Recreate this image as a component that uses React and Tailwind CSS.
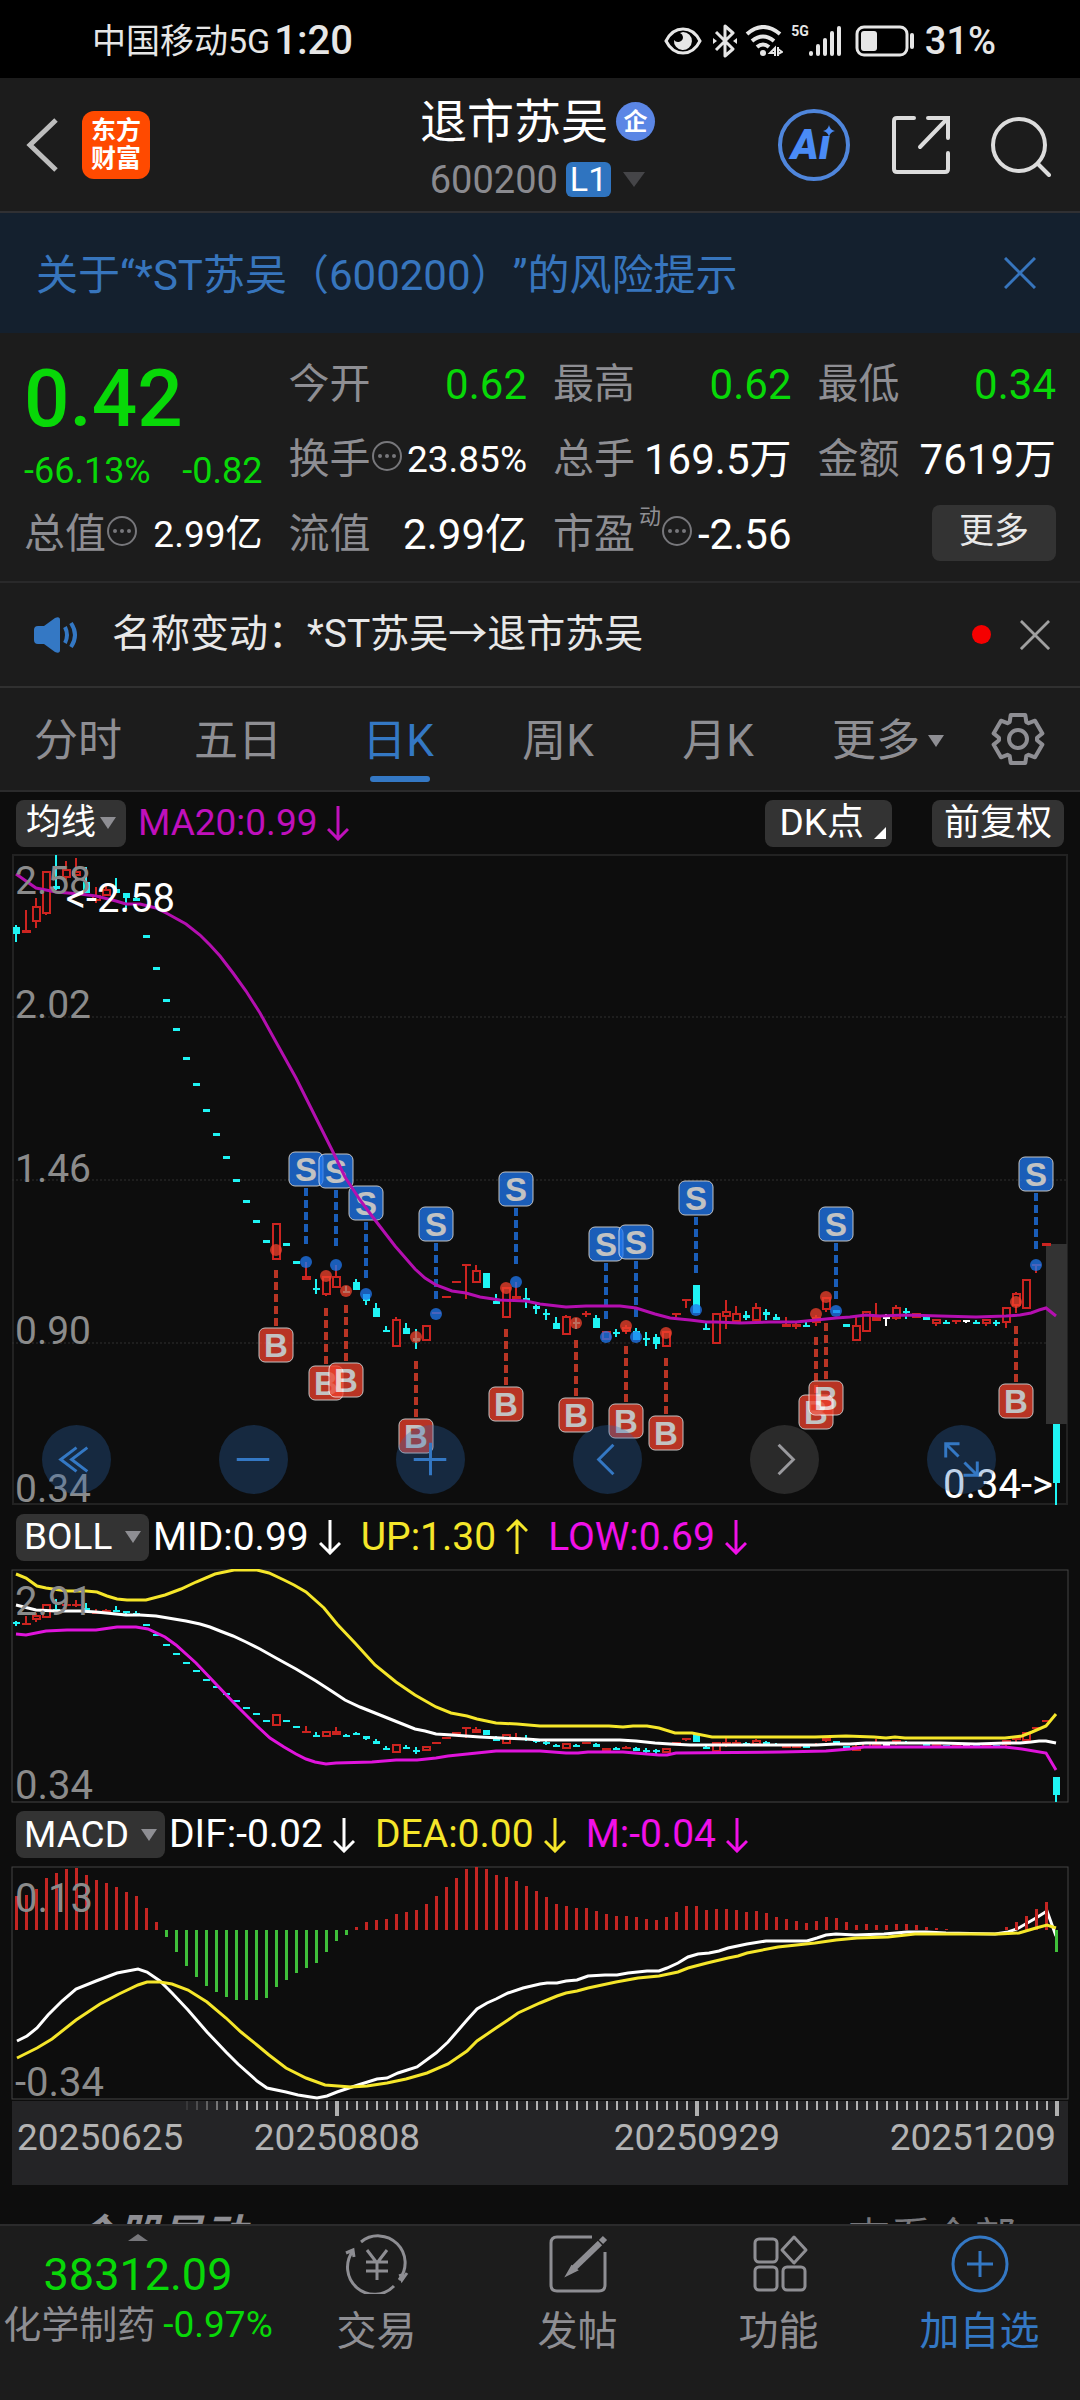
// One candle per trading day, 10px apart: [colour, high, top, bottom, low]
// c = cyan (down), r = red (up), w = white (flat)
const CANDLES = [
  ["c", 925, 927, 934, 942], ["r", 910, 930, 933, 933], ["r", 898, 906, 922, 928], ["r", 871, 871, 914, 915],
  ["c", 855, 886, 889, 890], ["r", 861, 869, 878, 886], ["r", 858, 871, 876, 880], ["c", 867, 882, 893, 893],
  ["r", 887, 895, 901, 903], ["r", 886, 889, 896, 896], ["c", 878, 889, 893, 893], ["c", 893, 893, 898, 909],
  ["c", 892, 898, 901, 901], ["c", 935, 935, 938, 938], ["c", 967, 967, 970, 970], ["c", 999, 999, 1002, 1002],
  ["c", 1028, 1028, 1031, 1031], ["c", 1057, 1057, 1060, 1060], ["c", 1083, 1083, 1086, 1086], ["c", 1109, 1109, 1112, 1112],
  ["c", 1133, 1133, 1136, 1136], ["c", 1156, 1156, 1159, 1159], ["c", 1179, 1179, 1182, 1182], ["c", 1200, 1200, 1203, 1203],
  ["c", 1220, 1220, 1223, 1223], ["c", 1240, 1240, 1243, 1243], ["r", 1223, 1223, 1260, 1260], ["c", 1243, 1243, 1246, 1246],
  ["c", 1261, 1261, 1264, 1264], ["r", 1262, 1276, 1280, 1280], ["c", 1279, 1288, 1290, 1294], ["r", 1276, 1276, 1295, 1296],
  ["r", 1265, 1276, 1288, 1288], ["c", 1286, 1291, 1293, 1293], ["c", 1279, 1282, 1290, 1290], ["c", 1294, 1294, 1301, 1305],
  ["c", 1303, 1308, 1317, 1317], ["c", 1326, 1330, 1332, 1332], ["r", 1317, 1319, 1347, 1347], ["c", 1323, 1328, 1334, 1334],
  ["c", 1329, 1338, 1341, 1349], ["r", 1325, 1325, 1341, 1341], ["r", 1312, 1312, 1314, 1314], ["r", 1296, 1296, 1298, 1298],
  ["r", 1281, 1281, 1283, 1283], ["r", 1264, 1264, 1266, 1299], ["r", 1265, 1270, 1283, 1283], ["c", 1273, 1273, 1288, 1288],
  ["c", 1294, 1301, 1304, 1304], ["r", 1287, 1287, 1318, 1318], ["r", 1282, 1296, 1299, 1299], ["c", 1288, 1298, 1301, 1308],
  ["c", 1304, 1306, 1309, 1314], ["c", 1309, 1313, 1315, 1320], ["c", 1317, 1323, 1329, 1329], ["r", 1315, 1316, 1335, 1335],
  ["c", 1318, 1322, 1324, 1329], ["r", 1311, 1313, 1315, 1317], ["c", 1315, 1318, 1328, 1328], ["r", 1331, 1331, 1340, 1340],
  ["c", 1329, 1332, 1334, 1337], ["r", 1325, 1327, 1332, 1334], ["c", 1328, 1331, 1340, 1340], ["c", 1332, 1338, 1340, 1346],
  ["c", 1334, 1337, 1344, 1349], ["r", 1331, 1331, 1347, 1347], ["r", 1313, 1313, 1315, 1317], ["r", 1299, 1299, 1301, 1308],
  ["c", 1285, 1285, 1313, 1313], ["c", 1323, 1328, 1330, 1330], ["r", 1313, 1313, 1344, 1344], ["r", 1300, 1311, 1317, 1329],
  ["r", 1306, 1313, 1322, 1324], ["c", 1311, 1315, 1318, 1320], ["r", 1303, 1307, 1321, 1321], ["c", 1309, 1312, 1315, 1320],
  ["c", 1314, 1317, 1320, 1320], ["r", 1317, 1324, 1327, 1327], ["r", 1321, 1324, 1327, 1329], ["c", 1320, 1325, 1327, 1327],
  ["r", 1315, 1317, 1323, 1326], ["r", 1297, 1297, 1310, 1312], ["c", 1310, 1310, 1313, 1313], ["c", 1324, 1324, 1327, 1327],
  ["r", 1315, 1325, 1341, 1341], ["r", 1311, 1311, 1332, 1332], ["r", 1303, 1317, 1321, 1321], ["w", 1314, 1317, 1319, 1326],
  ["r", 1305, 1307, 1319, 1320], ["c", 1308, 1311, 1313, 1319], ["r", 1313, 1313, 1318, 1318], ["c", 1315, 1317, 1320, 1320],
  ["r", 1319, 1319, 1324, 1326], ["c", 1320, 1322, 1324, 1324], ["r", 1320, 1320, 1322, 1324], ["w", 1320, 1320, 1322, 1323],
  ["c", 1320, 1322, 1324, 1324], ["r", 1319, 1319, 1324, 1326], ["c", 1320, 1322, 1324, 1326], ["r", 1307, 1307, 1323, 1328],
  ["r", 1292, 1293, 1306, 1313], ["r", 1279, 1279, 1309, 1309], ["r", 1264, 1264, 1266, 1273], ["r", 1243, 1243, 1246, 1246],
  ["c", 1424, 1424, 1483, 1505],
];

const CANDLE_COLORS = { c: "#1ff4f4", r: "#cc2420", w: "#ffffff" };

const MA20 = [
  [16, 874], [36, 888], [56, 892], [80, 894], [96, 896], [116, 901], [126, 904], [140, 904], [156, 908], [168, 914],
  [186, 924], [200, 935], [210, 945], [220, 956], [233, 973], [246, 991], [260, 1013], [276, 1042], [296, 1078], [316, 1118],
  [333, 1152], [345, 1177], [360, 1200], [375, 1220], [395, 1246], [415, 1269], [425, 1278], [436, 1285], [452, 1291],
  [466, 1293], [480, 1297], [500, 1300], [526, 1301], [540, 1304], [566, 1307], [586, 1306], [620, 1306], [636, 1308],
  [655, 1314], [670, 1318], [690, 1320], [706, 1322], [716, 1322], [740, 1323], [770, 1322], [796, 1322], [816, 1320],
  [836, 1318], [850, 1317], [866, 1315], [880, 1316], [906, 1315], [940, 1316], [976, 1317], [1006, 1316], [1020, 1315],
  [1031, 1313], [1039, 1310], [1046, 1308], [1056, 1316],
];

const BOLL_UP = [
  [16, 1574], [26, 1578], [37, 1586], [46, 1588], [67, 1591], [86, 1591], [97, 1592], [107, 1596], [117, 1599],
  [127, 1600], [146, 1600], [165, 1595], [181, 1589], [196, 1582], [215, 1574], [234, 1570], [257, 1570], [269, 1573],
  [284, 1580], [294, 1585], [306, 1592], [324, 1608], [337, 1624], [355, 1643], [375, 1665], [396, 1682], [415, 1695],
  [436, 1707], [451, 1713], [467, 1716], [477, 1719], [496, 1723], [517, 1724], [540, 1726], [609, 1726], [623, 1727],
  [633, 1726], [647, 1726], [659, 1728], [675, 1733], [692, 1733], [712, 1737], [815, 1737], [846, 1736], [874, 1737],
  [886, 1738], [895, 1737], [905, 1738], [1005, 1738], [1022, 1736], [1032, 1732], [1046, 1726], [1056, 1714],
];

const BOLL_LOW = [
  [16, 1634], [26, 1635], [46, 1631], [67, 1630], [96, 1630], [117, 1627], [136, 1627], [148, 1629], [165, 1637],
  [176, 1645], [196, 1663], [215, 1683], [234, 1703], [257, 1726], [270, 1738], [284, 1747], [296, 1754], [306, 1759],
  [315, 1762], [326, 1764], [336, 1763], [372, 1762], [396, 1760], [417, 1760], [436, 1758], [448, 1756], [496, 1751],
  [540, 1751], [566, 1753], [578, 1753], [588, 1752], [623, 1752], [659, 1755], [667, 1755], [676, 1753], [781, 1752],
  [826, 1751], [850, 1749], [864, 1747], [1005, 1747], [1022, 1749], [1046, 1753], [1056, 1770],
];

const MACD_BARS = [
  34, 35, 41, 52, 57, 61, 62, 55, 50, 47, 43, 38, 34, 22, 8, -7, -22, -36, -47, -56, -62, -67, -70, -70, -70, -68,
  -57, -50, -43, -38, -33, -22, -11, -5, 3, 8, 10, 11, 16, 18, 20, 26, 34, 43, 52, 61, 63, 61, 55, 53, 49, 44, 39,
  33, 26, 24, 22, 22, 19, 16, 14, 14, 13, 11, 10, 13, 18, 24, 24, 20, 21, 21, 20, 18, 19, 17, 13, 11, 9, 7, 9, 13,
  12, 8, 5, 6, 5, 5, 6, 6, 5, 3, 2, 1, 0, 0, 0, 0, 0, 3, 8, 14, 21, 28, -22,
];

const DIF = [
  [17, 2041], [27, 2036], [37, 2028], [48, 2015], [62, 2001], [76, 1989], [96, 1981], [117, 1973], [138, 1969],
  [147, 1972], [160, 1981], [172, 1993], [188, 2010], [207, 2032], [226, 2052], [238, 2064], [257, 2081], [267, 2088],
  [286, 2092], [298, 2095], [317, 2098], [327, 2096], [337, 2092], [358, 2085], [377, 2079], [387, 2078], [398, 2073],
  [417, 2067], [436, 2053], [448, 2042], [467, 2020], [477, 2009], [487, 2003], [496, 1999], [508, 1993], [523, 1988],
  [540, 1984], [547, 1983], [557, 1983], [566, 1981], [577, 1980], [588, 1976], [605, 1975], [617, 1975], [628, 1973],
  [647, 1971], [659, 1971], [667, 1968], [678, 1963], [688, 1957], [698, 1954], [709, 1953], [719, 1951], [728, 1948],
  [747, 1944], [766, 1941], [807, 1941], [817, 1938], [826, 1935], [836, 1934], [855, 1935], [884, 1934], [907, 1932],
  [926, 1932], [946, 1933], [995, 1934], [1008, 1932], [1017, 1929], [1036, 1918], [1047, 1911], [1056, 1936],
];

const DEA = [
  [17, 2058], [37, 2048], [52, 2039], [76, 2020], [88, 2012], [100, 2004], [119, 1994], [138, 1985], [147, 1982],
  [160, 1982], [172, 1984], [188, 1990], [207, 2002], [226, 2018], [241, 2032], [257, 2045], [269, 2055], [286, 2068],
  [306, 2078], [325, 2085], [351, 2087], [367, 2086], [387, 2083], [406, 2079], [427, 2073], [448, 2064], [467, 2051],
  [477, 2041], [496, 2028], [508, 2020], [518, 2013], [540, 2003], [557, 1996], [566, 1993], [577, 1991], [588, 1988],
  [616, 1982], [638, 1978], [659, 1976], [678, 1972], [688, 1968], [707, 1963], [728, 1958], [738, 1956], [747, 1953],
  [778, 1947], [815, 1943], [836, 1940], [857, 1938], [888, 1937], [915, 1934], [998, 1934], [1019, 1933], [1036, 1928],
  [1047, 1925], [1056, 1928],
];

// Buy / sell signals: [x, badge centre y, dot y]
const SELLS = [
  [306, 1169, 1262], [336, 1171, 1265], [366, 1203, 1294], [436, 1224, 1314], [516, 1189, 1282], [606, 1244, 1337],
  [636, 1242, 1337], [696, 1198, 1310], [836, 1224, 1311], [1036, 1174, 1265],
];
const BUYS = [
  [276, 1345, 1250], [326, 1383, 1276], [346, 1380, 1291], [416, 1436, 1337], [506, 1404, 1288], [576, 1415, 1323],
  [626, 1421, 1326], [666, 1433, 1333], [816, 1412, 1314], [826, 1398, 1297], [1016, 1401, 1302],
];

const toPoints = (pts) => pts.map((p) => p.join(",")).join(" ");
// The BOLL pane shows the same prices on a flatter scale
const toBoll = (y) => Math.round(1802 - (1504 - y) * 0.3124);

const GEAR = Array.from({ length: 6 }, (_, i) =>
  [[-26, 19], [-17, 25], [17, 25], [26, 19]].map(([deg, r]) => {
    const a = ((i * 60 - 90 + deg) * Math.PI) / 180;
    return `${(28 + r * Math.cos(a)).toFixed(1)},${(28 + r * Math.sin(a)).toFixed(1)}`;
  }).join(" ")
).join(" ");

function Triangle({ className, up }) {
  return (
    <svg viewBox="0 0 16 12" preserveAspectRatio="none" className={className} fill="currentColor" aria-hidden="true">
      <path d={up ? "M8 0L16 12H0Z" : "M0 0H16L8 12Z"} />
    </svg>
  );
}

function Arrow({ up }) {
  return (
    <svg viewBox="0 0 22 36" className="ml-[10px] h-9 w-[22px] shrink-0" fill="none" stroke="currentColor" strokeWidth="3" aria-hidden="true">
      <path d={up ? "M11 35V3M1 12L11 2L21 12" : "M11 1V33M1 24L11 34L21 24"} />
    </svg>
  );
}

function CloseIcon({ className }) {
  return (
    <svg viewBox="0 0 32 32" className={className} fill="none" stroke="currentColor" strokeWidth="3" aria-hidden="true">
      <path d="M1 1L31 31M31 1L1 31" />
    </svg>
  );
}

function InfoDots() {
  return (
    <svg viewBox="0 0 32 32" className="mb-2 h-8 w-8 shrink-0 text-[#77777b]" aria-hidden="true">
      <circle cx="16" cy="16" r="14" fill="none" stroke="currentColor" strokeWidth="2" />
      <g fill="currentColor">
        <circle cx="9" cy="16" r="2" />
        <circle cx="16" cy="16" r="2" />
        <circle cx="23" cy="16" r="2" />
      </g>
    </svg>
  );
}

function StatusBar() {
  return (
    <div className="flex h-[78px] items-center bg-black pt-1 pr-[84px] pl-[92px] text-[#e6e6e6]">
      <span className="text-[34px]">中国移动5G</span>
      <span className="ml-1 text-[40px] font-medium">1:20</span>
      <div className="ml-auto flex items-center">
        <svg viewBox="0 0 38 28" className="h-7 w-[38px]" aria-hidden="true">
          <path d="M2 14Q8 2 19 2T36 14Q30 26 19 26T2 14Z" fill="none" stroke="currentColor" strokeWidth="3" />
          <path d="M19 5a9 9 0 1 1-9 8a5 5 0 0 0 9-3a5 5 0 0 0-3-4Z" fill="currentColor" />
        </svg>
        <svg viewBox="0 0 24 34" className="ml-[11px] h-[34px] w-6" fill="none" stroke="currentColor" strokeWidth="3" aria-hidden="true">
          <path d="M3 8L20 25L12 32V2L20 9L3 26" strokeLinejoin="round" />
          <path d="M0 14L4 17L0 20ZM24 14L20 17L24 20Z" fill="currentColor" stroke="none" />
        </svg>
        <svg viewBox="0 0 38 32" className="ml-2 h-8 w-[38px]" fill="none" stroke="currentColor" strokeWidth="4" aria-hidden="true">
          <path d="M2 9Q18 -5 35 9M7 16Q18 7 29 16M12 22Q18 17 24 22" />
          <circle cx="18" cy="28" r="3" fill="currentColor" stroke="none" />
          <path d="M30 31V23L25 28H30M33 22V31M33 24L37 27L33 29" strokeWidth="2" />
        </svg>
        <span className="mb-5 ml-2 text-[14px] font-bold">5G</span>
        <svg viewBox="0 0 34 32" className="h-8 w-[34px]" fill="currentColor" aria-hidden="true">
          <rect x="0" y="26" width="4" height="5" rx="2" />
          <rect x="7" y="19" width="4" height="12" rx="2" />
          <rect x="14" y="13" width="4" height="18" rx="2" />
          <rect x="21" y="6" width="4" height="25" rx="2" />
          <rect x="28" y="1" width="4" height="30" rx="2" />
        </svg>
        <svg viewBox="0 0 60 32" className="ml-3 h-8 w-[60px]" aria-hidden="true">
          <rect x="2" y="2" width="50" height="28" rx="7" fill="none" stroke="currentColor" strokeWidth="3" />
          <rect x="6" y="6" width="16" height="20" rx="3" fill="currentColor" />
          <rect x="55" y="8" width="4" height="16" rx="2" fill="currentColor" />
        </svg>
        <span className="ml-[10px] text-[38px] font-medium">31%</span>
      </div>
    </div>
  );
}

function Header() {
  return (
    <header className="grid h-[135px] grid-cols-[1fr_auto_1fr] items-center border-b-2 border-[#303033] bg-[#1c1c1c] pr-[29px] pl-6">
      <div className="flex items-center gap-6">
        <button aria-label="返回">
          <svg viewBox="0 0 34 54" className="h-[54px] w-[34px]" fill="none" stroke="#bdbdbd" strokeWidth="5">
            <path d="M32 2L6 27L32 52" />
          </svg>
        </button>
        <a href="#home" className="flex h-[68px] w-[68px] flex-col items-center justify-center rounded-xl bg-[#ff4a00] text-[25px] leading-[28px] font-bold text-white">
          <span>东方</span>
          <span>财富</span>
        </a>
      </div>

      <div className="flex flex-col items-center pt-3">
        <h1 className="flex items-center gap-2 text-[47px] leading-[58px] text-white">
          退市苏吴
          <span className="flex h-[39px] w-[39px] items-center justify-center rounded-full bg-[#5b86e5] text-[24px] font-bold">企</span>
        </h1>
        <button className="flex items-center text-[38px] leading-[58px] text-[#8a8a8f]">
          600200
          <span className="ml-2 rounded-md bg-[#2f74c0] px-1 text-[34px] leading-[35px] text-white">L1</span>
          <Triangle className="ml-3 h-[15px] w-[22px] text-[#454548]" />
        </button>
      </div>

      <div className="flex items-center justify-end gap-10">
        <button aria-label="AI">
          <svg viewBox="0 0 74 74" className="h-[74px] w-[74px]" aria-hidden="true">
            <circle cx="37" cy="37" r="34" fill="none" stroke="#4f86dc" strokeWidth="4" />
            <path d="M52 17Q53 22 58 23Q53 24 52 29Q51 24 46 23Q51 22 52 17Z" fill="#4a8bf5" />
            <text x="14" y="51" fontSize="42" fill="#4a8bf5" className="font-black italic">Aı</text>
          </svg>
        </button>
        <button aria-label="分享">
          <svg viewBox="0 0 60 60" className="h-[60px] w-[60px]" fill="none" stroke="#dcdcdc" strokeWidth="4" strokeLinecap="round">
            <path d="M23 3H6Q3 3 3 6V54Q3 57 6 57H54Q57 57 57 54V38M37 3H57V23M56 4L29 32" />
          </svg>
        </button>
        <button aria-label="搜索" className="pt-1">
          <svg viewBox="0 0 60 60" className="h-[60px] w-[60px]" fill="none" stroke="#dcdcdc" strokeWidth="4" strokeLinecap="round">
            <circle cx="28" cy="28" r="26" />
            <path d="M47 47L58 58" />
          </svg>
        </button>
      </div>
    </header>
  );
}

function Stat({ label, sup, info, value, green, small }) {
  return (
    <div className="flex items-center justify-between whitespace-nowrap">
      <dt className="flex items-center text-[41px] text-[#8e8e93]">
        {label}
        {sup && <span className="mb-9 ml-1 text-[22px]">{sup}</span>}
        {info && <InfoDots />}
      </dt>
      <dd
        className={`${small ? "text-[37px]" : "text-[42px]"} ${green ? "text-[#08d808]" : "text-white"}`}
      >
        {value}
      </dd>
    </div>
  );
}

function Quote() {
  return (
    <section className="border-b-2 border-[#29292a] bg-[#1c1c1c] px-6 pt-[14px] pb-[9px]">
      <dl className="grid auto-rows-[75px] grid-cols-4 gap-x-[26px]">
        <div className="row-span-2 flex flex-col text-[#08d808]">
          <dt className="sr-only">最新价</dt>
          <dd className="pt-1 text-[80px] leading-[96px] font-medium">0.42</dd>
          <dd className="flex justify-between text-[36px] leading-[48px]">
            <span>-66.13%</span>
            <span>-0.82</span>
          </dd>
        </div>
        <Stat label="今开" value="0.62" green />
        <Stat label="最高" value="0.62" green />
        <Stat label="最低" value="0.34" green />
        <Stat label="换手" value="23.85%" info small />
        <Stat label="总手" value="169.5万" />
        <Stat label="金额" value="7619万" />
        <Stat label="总值" value="2.99亿" info small />
        <Stat label="流值" value="2.99亿" />
        <Stat label="市盈" sup="动" value="-2.56" info />
        <div className="flex items-center justify-end pb-1">
          <button className="h-14 rounded-lg bg-[#333333] px-[27px] text-[35px] text-[#e8e8e8]">更多</button>
        </div>
      </dl>
    </section>
  );
}

function Notice() {
  return (
    <div className="flex h-[105px] items-center border-b-2 border-[#303030] bg-[#1c1c1c] pr-[30px] pl-8">
      <svg viewBox="0 0 48 38" className="h-[38px] w-12 text-[#3478c4]" aria-hidden="true">
        <path d="M2 14Q2 10 6 10H12L23 2Q28 0 28 4V34Q28 38 23 36L12 28H6Q2 28 2 24Z" fill="currentColor" />
        <path d="M33 11Q37 19 33 27M39 7Q47 19 39 31" fill="none" stroke="currentColor" strokeWidth="4" />
      </svg>
      <p className="ml-8 text-[39px] text-[#e8e8e8]">名称变动：*ST苏吴→退市苏吴</p>
      <span className="ml-auto h-[19px] w-[19px] rounded-full bg-[#f50000]" />
      <button aria-label="关闭" className="ml-[29px]">
        <CloseIcon className="h-[30px] w-[30px] text-[#a0a0a0]" />
      </button>
    </div>
  );
}

function Tabs() {
  const tabs = ["分时", "五日", "日K", "周K", "月K"];
  return (
    <nav className="grid h-[104px] grid-cols-[repeat(5,1fr)_176px_104px] border-b-2 border-[#2b2b2c] bg-[#1c1c1c] text-[44px] text-[#8e8e93]">
      {tabs.map((t) => (
        <button
          key={t}
          className={
            t === "日K"
              ? "relative pt-1 pr-1 text-[#3478c4] after:absolute after:bottom-2 after:left-1/2 after:h-[6px] after:w-[60px] after:-translate-x-1/2 after:rounded-full after:bg-[#3478c4]"
              : "pt-1 pr-1"
          }
        >
          {t}
        </button>
      ))}
      <button className="flex items-center justify-center gap-2 pt-1">
        更多
        <Triangle className="h-3 w-4" />
      </button>
      <button aria-label="设置" className="flex items-center justify-center pr-5">
        <svg viewBox="0 0 56 56" className="h-14 w-14" fill="none" stroke="currentColor" strokeWidth="4" strokeLinejoin="round">
          <polygon points={GEAR} />
          <circle cx="28" cy="28" r="9" />
        </svg>
      </button>
    </nav>
  );
}

function PaneButton({ children }) {
  return (
    <button className="flex h-[47px] min-w-[133px] items-center justify-between gap-3 rounded-lg bg-[#333333] px-2 text-[37px] text-white">
      {children}
      <Triangle className="h-3 w-4 text-[#8e8e93]" />
    </button>
  );
}

function Candles({ scale = (y) => y }) {
  return (
    <g shapeRendering="crispEdges">
      {CANDLES.map(([kind, high, top, bottom, low], i) => {
        const x = 16 + i * 10;
        const [h, t, b, l] = [high, top, bottom, low].map(scale);
        const color = CANDLE_COLORS[kind];
        const hollow = kind === "r" && b - t > 4;
        return (
          <g key={x} fill={color}>
            <rect x={x - 1} y={h} width="2" height={t - h} />
            <rect x={x - 1} y={b} width="2" height={l - b} />
            {hollow ? (
              <rect x={x - 3} y={t + 1} width="7" height={b - t - 2} fill="none" stroke={color} strokeWidth="2" />
            ) : (
              <rect x={kind === "r" ? x - 4 : x - 3} y={t} width={kind === "r" ? 9 : 7} height={Math.max(b - t, 2)} />
            )}
          </g>
        );
      })}
    </g>
  );
}

function Signal({ x, y, dot, sell }) {
  const color = sell ? "#1f78f1" : "#f1412c";
  const start = sell ? y + 19 : y - 75;
  return (
    <g opacity="0.75">
      <line x1={x} y1={start} x2={x} y2={start + 56} stroke={color} strokeWidth="4" strokeDasharray="8 4" />
      <circle cx={x} cy={dot} r="6" fill={color} />
      <rect x={x - 17} y={y - 17} width="34" height="34" rx="6" fill={color} stroke="#ffffff" strokeWidth="1" />
      <text x={x} y={y + 12} textAnchor="middle" fontSize="33" fontWeight="bold" fill="#ffffff" className="font-['Liberation_Sans',sans-serif]">
        {sell ? "S" : "B"}
      </text>
    </g>
  );
}

const CONTROLS = [
  { label: "最早", icon: "M35 23L19 35L35 47M46 23L30 35L46 47" },
  { label: "缩小", icon: "M18 35H51" },
  { label: "放大", icon: "M18 35H51M35 18V51" },
  { label: "左移", icon: "M41 20L26 35L41 50" },
  { label: "右移", icon: "M29 20L44 35L29 50", off: true },
  { label: "全屏", icon: "M19 33V19H33M20 20L32 32M51 37V51H37M50 50L38 38" },
];

function PriceChart() {
  return (
    <div className="relative">
      <svg viewBox="0 854 1080 651" className="block h-auto w-full" role="img" aria-label="日K线">
        <rect x="13" y="855" width="1054" height="649" fill="none" stroke="#222222" strokeWidth="2" />
        <g stroke="#303030" strokeWidth="1" strokeDasharray="2 2">
          <line x1="12" y1="1017" x2="1068" y2="1017" />
          <line x1="12" y1="1180" x2="1068" y2="1180" />
          <line x1="12" y1="1343" x2="1068" y2="1343" />
        </g>
        <rect x="1046" y="1244" width="21" height="180" fill="#333333" />
        <Candles />
        {SELLS.map(([x, y, dot]) => (
          <Signal key={x} x={x} y={y} dot={dot} sell />
        ))}
        {BUYS.map(([x, y, dot]) => (
          <Signal key={x} x={x} y={y} dot={dot} />
        ))}
        <polyline points={toPoints(MA20)} fill="none" stroke="#b40fb0" strokeWidth="3" />
        <g fontSize="39" fill="#8b8b8b">
          <text x="15" y="894">2.58</text>
          <text x="15" y="1018">2.02</text>
          <text x="15" y="1182">1.46</text>
          <text x="15" y="1344">0.90</text>
          <text x="15" y="1502">0.34</text>
        </g>
        <g fontSize="40" fill="#ffffff">
          <text x="175" y="912" textAnchor="end">&lt;-2.58</text>
          <text x="1053" y="1498" textAnchor="end">0.34-&gt;</text>
        </g>
      </svg>
      <div className="absolute right-[84px] bottom-[11px] left-[42px] flex justify-between">
        {CONTROLS.map(({ label, icon, off }) => (
          <button
            key={label}
            aria-label={label}
            className={`h-[69px] w-[69px] rounded-full ${off ? "bg-[#2e2e2e]/90 text-[#9a9a9e]" : "bg-[#2b6bb5]/30 text-[#3478c4]"}`}
          >
            <svg viewBox="0 0 70 70" fill="none" stroke="currentColor" strokeWidth="3">
              <path d={icon} />
            </svg>
          </button>
        ))}
      </div>
    </div>
  );
}

function BollChart() {
  return (
    <svg viewBox="0 1569 1080 234" className="block h-auto w-full" role="img" aria-label="BOLL">
      <rect x="12" y="1570" width="1056" height="232" fill="none" stroke="#454545" strokeWidth="1" />
      <Candles scale={toBoll} />
      <g fill="none" strokeWidth="3">
        <polyline points={toPoints(MA20.map(([x, y]) => [x, toBoll(y)]))} stroke="#ffffff" />
        <polyline points={toPoints(BOLL_UP)} stroke="#f5e62a" />
        <polyline points={toPoints(BOLL_LOW)} stroke="#e014dc" />
      </g>
      <g fontSize="40" fill="#8b8b8b">
        <text x="15" y="1615">2.91</text>
        <text x="15" y="1799">0.34</text>
      </g>
    </svg>
  );
}

function MacdChart() {
  return (
    <svg viewBox="0 1866 1080 235" className="block h-auto w-full" role="img" aria-label="MACD">
      <rect x="12" y="1867" width="1056" height="232" fill="none" stroke="#454545" strokeWidth="1" />
      <polyline points={toPoints(DIF)} fill="none" stroke="#ffffff" strokeWidth="3" />
      <g shapeRendering="crispEdges">
        {MACD_BARS.map((v, i) => (
          <rect
            key={i}
            x={15 + i * 10}
            y={v > 0 ? 1930 - v : 1930}
            width="3"
            height={Math.abs(v)}
            fill={v > 0 ? "#c42522" : "#3fbf3a"}
          />
        ))}
      </g>
      <polyline points={toPoints(DEA)} fill="none" stroke="#f5e62a" strokeWidth="3" />
      <g fontSize="40" fill="#8b8b8b">
        <text x="15" y="1912">0.13</text>
        <text x="15" y="2096">-0.34</text>
      </g>
    </svg>
  );
}

function DateAxis() {
  return (
    <svg viewBox="0 2101 1080 84" className="block h-auto w-full" role="img" aria-label="日期">
      <rect x="12" y="2101" width="1056" height="84" fill="#242426" />
      <g fill="#b0b0b0" shapeRendering="crispEdges">
        {Array.from({ length: 88 }, (_, n) => {
          const i = n + 17;
          const major = i % 36 === 32;
          return (
            <rect
              key={i}
              x={(major ? 15 : 16) + i * 10}
              y="2101"
              width={major ? 4 : 2}
              height={major ? 15 : 9}
              opacity={Math.min(1, (n + 1) / 7)}
            />
          );
        })}
      </g>
      <g fontSize="37" fill="#b3b3b3">
        <text x="17" y="2150">20250625</text>
        <text x="337" y="2150" textAnchor="middle">20250808</text>
        <text x="697" y="2150" textAnchor="middle">20250929</text>
        <text x="1056" y="2150" textAnchor="end">20251209</text>
      </g>
    </svg>
  );
}

function NavItem({ label, active, children }) {
  return (
    <button className={`flex flex-col items-center pt-2 text-[40px] ${active ? "text-[#3478c4]" : "text-[#8e8e93]"}`}>
      <svg viewBox="0 0 64 60" className="h-[60px] w-16" fill="none" stroke="currentColor" strokeWidth="3" aria-hidden="true">
        {children}
      </svg>
      <span className="pt-2 leading-[60px]">{label}</span>
    </button>
  );
}

function BottomNav() {
  return (
    <nav className="grid flex-1 grid-cols-[276px_repeat(4,1fr)] items-start border-t-2 border-[#2b2b2c] bg-[#1c1c1c]">
      <a href="#sector" className="flex flex-col items-center pt-2 whitespace-nowrap text-[#08d808]">
        <Triangle up className="h-[7px] w-5 text-[#77777b]" />
        <span className="pt-2 text-[45px] leading-[52px]">38312.09</span>
        <span className="flex items-center gap-2 text-[37px] leading-[48px]">
          <span className="text-[38px] text-[#8e8e93]">化学制药</span>
          -0.97%
        </span>
      </a>
      <NavItem label="交易">
        <path d="M16 8A27 27 0 0 1 54 46M49 52A27 27 0 0 1 8 17M1 19L8 16L9 23M62 39L57 46L55 40" />
        <path d="M22 16L32 29L42 16M32 29V46M21 28H43M21 37H43" />
      </NavItem>
      <NavItem label="发帖">
        <path d="M46 3H11Q5 3 5 9V51Q5 57 11 57H53Q59 57 59 51V18" />
        <path d="M54 9L27 35" strokeWidth="6" />
        <path d="M22 40L26 33L30 36Z" fill="currentColor" />
        <path d="M55 8L59 4" strokeWidth="6" />
      </NavItem>
      <NavItem label="功能">
        <rect x="8" y="5" width="22" height="23" rx="4" />
        <rect x="8" y="33" width="22" height="23" rx="4" />
        <rect x="36" y="33" width="22" height="23" rx="4" />
        <path d="M47 3L59 16L47 29L35 16Z" strokeLinejoin="round" />
      </NavItem>
      <NavItem label="加自选" active>
        <circle cx="32" cy="30" r="27" />
        <path d="M32 17V43M19 30H45" />
      </NavItem>
    </nav>
  );
}

export default function App() {
  return (
    <div className="flex min-h-screen flex-col bg-[#0d0d0d] font-[Roboto,'Noto_Sans_CJK_SC',sans-serif] [text-spacing-trim:space-all]">
      <StatusBar />
      <Header />

      <div className="flex h-[120px] items-center justify-between bg-[#14202e] pr-11 pl-9 text-[#3775bd]">
        <a href="#risk" className="pt-1 text-[42px]">
          关于“*ST苏吴（600200）”的风险提示
        </a>
        <button aria-label="关闭">
          <CloseIcon className="h-8 w-8" />
        </button>
      </div>

      <Quote />
      <Notice />
      <Tabs />

      <div className="flex h-[62px] items-center px-4">
        <button className="flex h-[47px] items-center rounded-lg bg-[#333333] px-[10px] text-[35px] text-white">
          均线
          <Triangle className="ml-1 h-3 w-4 text-[#8e8e93]" />
        </button>
        <span className="ml-3 flex items-center text-[37px] text-[#c010bc]">
          MA20:0.99
          <Arrow />
        </span>
        <button className="ml-auto flex h-[47px] items-center rounded-lg bg-[#333333] pr-[6px] pl-[14px] text-[37px] text-white">
          DK点
          <svg viewBox="0 0 12 12" className="mt-5 ml-[10px] h-3 w-3" fill="currentColor" aria-hidden="true">
            <path d="M12 0V12H0Z" />
          </svg>
        </button>
        <button className="ml-10 flex h-[47px] items-center rounded-lg bg-[#333333] px-3 text-[36px] text-white">前复权</button>
      </div>
      <PriceChart />

      <div className="flex h-16 items-center px-4 text-[39px]">
        <PaneButton>BOLL</PaneButton>
        <span className="ml-1 flex items-center text-white">MID:0.99<Arrow /></span>
        <span className="ml-5 flex items-center text-[#f5e62a]">UP:1.30<Arrow up /></span>
        <span className="ml-5 flex items-center text-[#f010e8]">LOW:0.69<Arrow /></span>
      </div>
      <BollChart />

      <div className="flex h-[63px] items-center px-4 text-[39px]">
        <PaneButton>MACD</PaneButton>
        <span className="ml-1 flex items-center text-white">DIF:-0.02<Arrow /></span>
        <span className="ml-5 flex items-center text-[#f5e62a]">DEA:0.00<Arrow /></span>
        <span className="ml-5 flex items-center text-[#f010e8]">M:-0.04<Arrow /></span>
      </div>
      <MacdChart />
      <DateAxis />

      {/* Next section, mostly hidden behind the bottom bar */}
      <div className="flex h-[39px] items-start justify-between overflow-hidden pt-[18px] pr-10 pl-[74px] text-[#8e8e93]">
        <h2 className="text-[43px] font-bold italic">个股异动</h2>
        <a href="#all" className="flex items-center pt-1 text-[42px] text-[#77777b]">
          查看全部
          <svg viewBox="0 0 16 28" className="ml-2 h-7 w-4" fill="none" stroke="currentColor" strokeWidth="3" aria-hidden="true">
            <path d="M2 2L14 14L2 26" />
          </svg>
        </a>
      </div>
      <BottomNav />
    </div>
  );
}
